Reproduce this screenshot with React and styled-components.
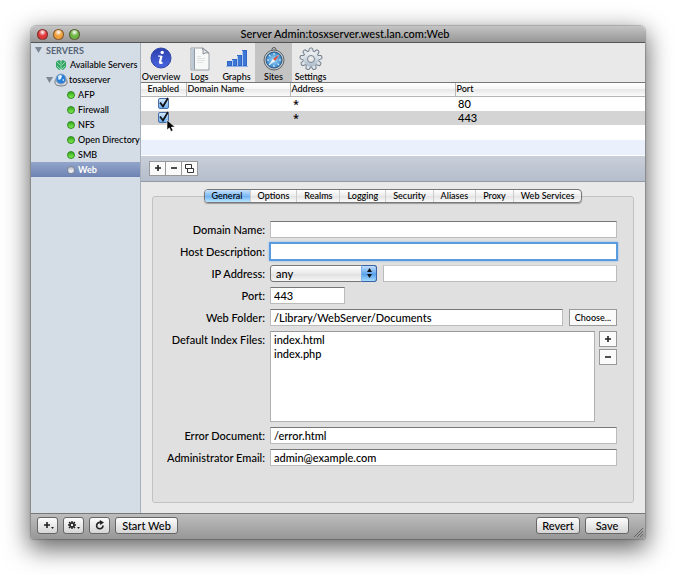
import React, { useState } from "react";
import styled, { createGlobalStyle } from "styled-components";

const SERVICES = ["AFP", "Firewall", "NFS", "Open Directory", "SMB", "Web"];
const TABS = [
  "General",
  "Options",
  "Realms",
  "Logging",
  "Security",
  "Aliases",
  "Proxy",
  "Web Services",
];

// Icons
const InfoIcon = () => (
  <svg width="22" height="22" viewBox="0 0 22 22">
    <defs>
      <linearGradient id="info" x1="0" y1="0" x2="0" y2="1">
        <stop offset="0" stopColor="#2c3fae" />
        <stop offset="1" stopColor="#4a66e0" />
      </linearGradient>
    </defs>
    <circle cx="11" cy="11" r="10" fill="url(#info)" stroke="#3346a8" />
    <circle cx="12.2" cy="5.400" r="1.700" fill="#fff" />
    <path
      d="M8.2 9.200h2.300M12.600 16h-1.200"
      stroke="#fff"
      strokeWidth="1.200"
    />
    <path
      d="M11.500 8.800l-1.600 6.400q0 1.200 2.400.3"
      fill="none"
      stroke="#fff"
      strokeWidth="2.200"
    />
  </svg>
);

const LogsIcon = () => (
  <svg width="20" height="24" viewBox="0 0 20 24">
    <path d="M1 1h12l6 5v17H1z" fill="#f7f8f8" stroke="#9aa1a6" />
    <path d="M1.500 1.500h3v21h-3z" fill="#bcc8d2" />
    <path d="M4.500 1.500v21" stroke="#8f9ba5" />
    <path d="M12 1q2 3 1 6 3-2 6-1z" fill="#e9ebec" stroke="#8b9399" />
    <path
      d="M7 9.500h4M7 11.500h8M7 13.500h8M7 15.500h6"
      stroke="#dfe1e3"
      strokeWidth="1"
    />
  </svg>
);

const GraphsIcon = () => (
  <svg width="22" height="22" viewBox="0 0 22 22">
    <g fill="#3d78d6" stroke="#2f66c4">
      <rect x="1.500" y="14.500" width="4" height="4" />
      <rect x="6.500" y="12.500" width="4" height="6" />
      <rect x="11.500" y="8.500" width="4" height="10" />
      <rect x="16.500" y="3.500" width="4" height="15" />
    </g>
    <path d="M0 19.500h22" stroke="#8fb2e8" />
    <path d="M6.500 13v6M11.500 9v10M16.500 4v15" stroke="#a9c6f0" />
  </svg>
);

const TICKS = [0, 45, 90, 135, 180, 225, 270, 315];

const SitesIcon = () => (
  <svg width="24" height="24" viewBox="0 0 24 24">
    <defs>
      <radialGradient id="dial">
        <stop offset="0" stopColor="#a9dcf8" />
        <stop offset="1" stopColor="#2f82cc" />
      </radialGradient>
    </defs>
    <circle cx="12" cy="2.500" r="2" fill="none" stroke="#555" />
    <circle cx="12" cy="13" r="10" fill="#c3c8cc" stroke="#5c6369" />
    <circle cx="12" cy="13" r="8" fill="url(#dial)" stroke="#3a5d80" />
    {TICKS.map((a) => (
      <path
        key={a}
        d="M12 6v2"
        stroke="#f2f9fd"
        transform={`rotate(${a} 12 13)`}
      />
    ))}
    <path d="M17.500 7.500l-4.500 6.500-2-2z" fill="#e24a35" />
    <path d="M6.500 18.500l4.500-6.500 2 2z" fill="#f5f9fc" />
  </svg>
);

const TEETH = [0, 40, 80, 120, 160, 200, 240, 280, 320];

const GearIcon = () => (
  <svg width="24" height="24" viewBox="0 0 24 24">
    <defs>
      <linearGradient id="gear" x1="0" y1="0" x2="0" y2="1">
        <stop offset="0" stopColor="#f2f4f6" />
        <stop offset="1" stopColor="#a9b9ca" />
      </linearGradient>
    </defs>
    <g fill="#dfe5eb" stroke="#75818e">
      <circle cx="12" cy="12" r="7.800" />
      {TEETH.map((a) => (
        <path
          key={a}
          d="M9.600 5l.8-3.600q1.600-1 3.200 0l.8 3.600"
          transform={`rotate(${a} 12 12)`}
        />
      ))}
    </g>
    <circle cx="12" cy="12" r="7.600" fill="url(#gear)" />
    <circle cx="12" cy="12" r="3.500" fill="#e9ebed" stroke="#75818e" />
  </svg>
);

const GlobeIcon = () => (
  <svg width="12" height="12" viewBox="0 0 12 12">
    <path d="M1 3l3-2 2 1 2-1 3 2v5l-3 3-2-1-2 1-3-3z" fill="#36a568" />
    <path
      d="M2 3l3 3M10 3L7 6M2 7l3 3M10 7l-3 3M6 2v9"
      stroke="#a5e6bb"
      strokeWidth=".8"
    />
  </svg>
);

const ServerIcon = () => (
  <svg width="14" height="14" viewBox="0 0 14 14">
    <path d="M1 8q-1 5 6 5t6-5l-1-2H2z" fill="#d6d9dd" stroke="#767d86" />
    <circle cx="7" cy="6" r="5" fill="#2b7fd8" stroke="#8fa3b8" />
    <path d="M4 3q3-2 4 0L7 6 4.500 7zM8 7l2-1v2z" fill="#dff1fb" />
  </svg>
);

const Disclosure = () => (
  <svg width="7" height="6" viewBox="0 0 7 6">
    <path d="M0 0h7L3.500 6z" fill="#7c8894" />
  </svg>
);

const DuplicateIcon = () => (
  <svg width="9" height="9" viewBox="0 0 9 9">
    <path d="M.5.500h6v4h-6zM2.500 4.500h6v4h-6z" fill="#fff" stroke="#333" />
  </svg>
);

const PlusIcon = ({ menu }) => (
  <svg width={menu ? 12 : 10} height="10" viewBox={menu ? "0 0 12 10" : "0 0 10 10"}>
    <path d="M5 2v6M2 5h6" stroke="#222" strokeWidth="1.600" />
    {menu && <path d="M9 7h3l-1.500 2z" fill="#222" />}
  </svg>
);

const MinusIcon = () => (
  <svg width="10" height="10" viewBox="0 0 10 10">
    <path d="M2 5h6" stroke="#222" strokeWidth="1.600" />
  </svg>
);

const ActionIcon = () => (
  <svg width="13" height="10" viewBox="0 0 13 10">
    <path
      d="M5 1v8M1 5h8M2 2l6 6M8 2L2 8"
      stroke="#222"
      strokeWidth="1.400"
    />
    <circle cx="5" cy="5" r="2" fill="#eee" stroke="#222" strokeWidth="1.500" />
    <path d="M10 7h3l-1.500 2z" fill="#222" />
  </svg>
);

const RefreshIcon = () => (
  <svg width="10" height="10" viewBox="0 0 10 10">
    <path
      d="M8 5.500A3.200 3.200 0 1 1 5.500 2.500"
      fill="none"
      stroke="#222"
      strokeWidth="1.600"
    />
    <path d="M4.800 0L9 2.500 5.200 5z" fill="#222" />
  </svg>
);

const Pointer = () => (
  <CursorSvg width="10" height="14" viewBox="0 0 10 14">
    <path
      d="M1 1v10l2.400-2.200L5 12.500l2-.9-1.600-3.500H9z"
      fill="#000"
      stroke="#fff"
      strokeWidth=".6"
    />
  </CursorSvg>
);

const Check = ({ label, pointer }) => (
  <CheckWrap>
    <CheckBox type="checkbox" defaultChecked aria-label={label} />
    <CheckMark width="11" height="12" viewBox="0 0 11 12">
      <path d="M2 5.500l3 4L10 1" fill="none" stroke="#111" strokeWidth="1.800" />
    </CheckMark>
    {pointer && <Pointer />}
  </CheckWrap>
);

const App = () => {
  const [tab, setTab] = useState("General");
  const [service, setService] = useState("Web");

  return (
    <Desktop>
      <GlobalStyle />
      <Window>
        <TitleBar>
          <Lights>
            <Light $color="#e0383b" aria-label="Close" />
            <Light $color="#f0a03c" aria-label="Minimize" />
            <Light $color="#6fb545" aria-label="Zoom" />
          </Lights>
          <Title>Server Admin:tosxserver.west.lan.com:Web</Title>
        </TitleBar>

        <Body>
          <Sidebar>
            <SideHeading>
              <Disclosure />
              SERVERS
            </SideHeading>
            <SideItem $indent={24}>
              <GlobeIcon />
              Available Servers
            </SideItem>
            <SideItem $indent={15} $gap={1}>
              <Disclosure />
              <ServerIcon />
              tosxserver
            </SideItem>
            {SERVICES.map((name) => (
              <SideItem
                key={name}
                $indent={36}
                $active={service === name}
                onClick={() => setService(name)}
              >
                <Dot $off={name === "Web"} />
                {name}
              </SideItem>
            ))}
          </Sidebar>

          <Content>
            <Toolbar>
              <Tool>
                <InfoIcon />
                Overview
              </Tool>
              <Tool>
                <LogsIcon />
                Logs
              </Tool>
              <Tool>
                <GraphsIcon />
                Graphs
              </Tool>
              <Tool $active>
                <SitesIcon />
                Sites
              </Tool>
              <Tool>
                <GearIcon />
                Settings
              </Tool>
            </Toolbar>

            <SiteTable>
              <colgroup>
                <col style={{ width: 45 }} />
                <col style={{ width: 104 }} />
                <col style={{ width: 165 }} />
                <col />
              </colgroup>
              <thead>
                <tr>
                  <HeadCell $center>Enabled</HeadCell>
                  <HeadCell>Domain Name</HeadCell>
                  <HeadCell>Address</HeadCell>
                  <HeadCell>Port</HeadCell>
                </tr>
              </thead>
              <tbody>
                <Row>
                  <Cell $center>
                    <Check label="Enable port 80" />
                  </Cell>
                  <Cell />
                  <AnyCell>*</AnyCell>
                  <Cell>80</Cell>
                </Row>
                <Row $color="#d4d4d4">
                  <Cell $center>
                    <Check label="Enable port 443" pointer />
                  </Cell>
                  <Cell />
                  <AnyCell>*</AnyCell>
                  <Cell>443</Cell>
                </Row>
                <Row $empty>
                  <Cell colSpan="4" />
                </Row>
                <Row $empty $color="#eaf1fd">
                  <Cell colSpan="4" />
                </Row>
              </tbody>
            </SiteTable>

            <TableBar>
              <Square aria-label="Add site">
                <PlusIcon />
              </Square>
              <Square aria-label="Remove site">
                <MinusIcon />
              </Square>
              <Square aria-label="Duplicate site">
                <DuplicateIcon />
              </Square>
            </TableBar>

            <Pane>
              <Tabs role="tablist">
                {TABS.map((name) => (
                  <Tab
                    key={name}
                    role="tab"
                    aria-selected={tab === name}
                    $active={tab === name}
                    onClick={() => setTab(name)}
                  >
                    {name}
                  </Tab>
                ))}
              </Tabs>
              <Group>
                <Label htmlFor="domain">Domain Name:</Label>
                <Input id="domain" />

                <Label htmlFor="host">Host Description:</Label>
                <Input id="host" $focused />

                <Label htmlFor="ip">IP Address:</Label>
                <Line>
                  <SelectWrap>
                    <Select id="ip">
                      <option>any</option>
                    </Select>
                    <Stepper>
                      <svg width="7" height="10" viewBox="0 0 7 10">
                        <path d="M1 4h5L3.500 0zM1 6h5l-2.500 4z" fill="#111" />
                      </svg>
                    </Stepper>
                  </SelectWrap>
                  <Input aria-label="Other IP address" $light />
                </Line>

                <Label htmlFor="port">Port:</Label>
                <PortInput id="port" defaultValue="443" />

                <Label htmlFor="folder">Web Folder:</Label>
                <Line>
                  <Input id="folder" defaultValue="/Library/WebServer/Documents" />
                  <Choose>Choose...</Choose>
                </Line>

                <Label htmlFor="index">Default Index Files:</Label>
                <ListLine>
                  <IndexFiles id="index" defaultValue={"index.html\nindex.php"} />
                  <Stack>
                    <SmallSquare aria-label="Add index file">
                      <PlusIcon />
                    </SmallSquare>
                    <SmallSquare aria-label="Remove index file">
                      <MinusIcon />
                    </SmallSquare>
                  </Stack>
                </ListLine>

                <Label htmlFor="error">Error Document:</Label>
                <Input id="error" defaultValue="/error.html" />

                <Label htmlFor="email">Administrator Email:</Label>
                <Input id="email" defaultValue="admin@example.com" />
              </Group>
            </Pane>
          </Content>
        </Body>

        <Footer>
          <FootButton aria-label="Add">
            <PlusIcon menu />
          </FootButton>
          <FootButton aria-label="Actions">
            <ActionIcon />
          </FootButton>
          <FootButton aria-label="Refresh">
            <RefreshIcon />
          </FootButton>
          <FootButton $width={63}>Start Web</FootButton>
          <Spacer />
          <FootButton $width={44}>Revert</FootButton>
          <FootButton $width={44}>Save</FootButton>
          <Grip width="9" height="9" viewBox="0 0 9 9">
            <path d="M0 9l9-9M3 9l6-6M6 9l3-3" stroke="#666" />
          </Grip>
        </Footer>
      </Window>
    </Desktop>
  );
};

const GlobalStyle = createGlobalStyle`
  * {
    box-sizing: border-box;
  }
  body {
    margin: 0;
    background: #fff;
  }
  body, button, input, select, textarea {
    font-family: Lato, "Open Sans", sans-serif;
    font-size: 11px;
    font-weight: 500;
    color: #000;
  }
  button {
    padding: 0;
    border: 0;
    background: none;
    white-space: nowrap;
  }
  svg {
    flex: none;
  }
`;

const Desktop = styled.main`
  padding: 26px 35px 36px 31px;
`;

const Window = styled.div`
  display: flex;
  flex-direction: column;
  border-radius: 5px 5px 2px 2px;
  box-shadow: 0 0 1px 1px rgba(0, 0, 0, 0.2), 0 8px 24px 2px rgba(0, 0, 0, 0.6);
`;

const TitleBar = styled.header`
  display: flex;
  align-items: center;
  height: 17px;
  padding: 0 6px;
  border-bottom: 1px solid #555;
  border-radius: 5px 5px 0 0;
  background: linear-gradient(#c4c4c4, #979797);
`;

const Lights = styled.div`
  display: flex;
  gap: 5px;
  width: 54px;
`;

const Light = styled.button`
  width: 11px;
  height: 11px;
  border: 1px solid rgba(60, 30, 20, 0.6);
  border-radius: 50%;
  background: radial-gradient(
    circle at 50% 25%,
    #fff 0,
    ${(props) => props.$color} 45%
  );
`;

const Title = styled.h1`
  flex: 1;
  margin: 0 40px 0 0;
  font-size: 11px;
  line-height: 16px;
  font-weight: 500;
  text-align: center;
`;

const Body = styled.div`
  display: flex;
`;

const Sidebar = styled.nav`
  width: 110px;
  flex: none;
  border-right: 1px solid #a9afb6;
  background: #d4dce6;
`;

const SideHeading = styled.h2`
  display: flex;
  align-items: center;
  gap: 4px;
  height: 14px;
  margin: 0;
  padding-left: 4px;
  font-size: 9px;
  font-weight: 700;
  color: #566573;
`;

const SideItem = styled.button`
  display: flex;
  align-items: center;
  gap: ${(props) => props.$gap || 3}px;
  width: 100%;
  height: 15px;
  padding-left: ${(props) => props.$indent}px;
  font-size: 9px;
  font-weight: ${(props) => (props.$active ? 700 : 500)};
  color: ${(props) => (props.$active ? "#fff" : "#000")};
  background: ${(props) =>
    props.$active ? "linear-gradient(#93a5cb, #6d83b2)" : "none"};
`;

const Dot = styled.span`
  flex: none;
  width: 8px;
  height: 8px;
  border: 1px solid ${(props) => (props.$off ? "#7e8798" : "#2e8a1d")};
  border-radius: 50%;
  background: ${(props) =>
    props.$off
      ? "linear-gradient(#b9bfc9, #fff)"
      : "linear-gradient(#36a51f, #7df04f)"};
`;

const Content = styled.section`
  flex: 1;
  min-width: 0;
  background: #e9e9e9;
`;

const Toolbar = styled.div`
  display: flex;
  height: 40px;
  border-bottom: 1px solid #777;
`;

const Tool = styled.button`
  display: flex;
  flex-direction: column;
  align-items: center;
  justify-content: space-between;
  width: 37px;
  height: 39px;
  padding-top: 4px;
  font-size: 9px;
  line-height: 11px;
  background: ${(props) => (props.$active ? "#c3c3c3" : "none")};

  &:first-child {
    width: 40px;
  }
`;

const SiteTable = styled.table`
  width: 100%;
  table-layout: fixed;
  border-collapse: collapse;
  background: #fff;
`;

const HeadCell = styled.th`
  height: 13px;
  padding: 0 1px;
  border-bottom: 1px solid #b5b5b5;
  border-left: ${(props) => (props.$center ? "0" : "1px solid #b9b9b9")};
  background: linear-gradient(#fff 0, #f6f6f6 45%, #e8e8e8 50%, #fbfbfb);
  font-size: 9px;
  line-height: 12px;
  font-weight: 500;
  text-align: ${(props) => (props.$center ? "center" : "left")};
`;

const Row = styled.tr`
  height: ${(props) => (props.$empty ? 15 : 14)}px;
  background: ${(props) => props.$color || "#fff"};
`;

const Cell = styled.td`
  padding: 0 3px;
  line-height: 14px;
  text-align: ${(props) => (props.$center ? "center" : "left")};
`;

const AnyCell = styled(Cell)`
  font-family: "Open Sans", sans-serif;
  font-weight: 600;
`;

const CheckWrap = styled.span`
  display: block;
  position: relative;
  width: 11px;
  height: 11px;
  margin: 0 auto;
`;

const CheckBox = styled.input`
  appearance: none;
  display: block;
  width: 11px;
  height: 11px;
  margin: 0;
  border: 1px solid #4a6da8;
  border-radius: 2px;
  background: linear-gradient(#d3e8fc, #6caef0);
`;

const CheckMark = styled.svg`
  position: absolute;
  left: 0;
  top: -1px;
  pointer-events: none;

  ${CheckBox}:not(:checked) + & {
    display: none;
  }
`;

const CursorSvg = styled.svg`
  position: absolute;
  left: 8px;
  top: 7px;
  pointer-events: none;
`;

const TableBar = styled.div`
  display: flex;
  align-items: center;
  height: 27px;
  padding-left: 8px;
  border-top: 1px solid #fff;
  border-bottom: 1px solid #929aa6;
  background: linear-gradient(#c9cfda, #b5bdcb);
`;

const Square = styled.button`
  display: flex;
  align-items: center;
  justify-content: center;
  width: 17px;
  height: 15px;
  margin-right: -1px;
  border: 1px solid #999;
  background: #fafafa;
`;

const SmallSquare = styled(Square)`
  width: 18px;
  height: 16px;
  margin: 0;
`;

const Pane = styled.div`
  display: flex;
  flex-direction: column;
  padding: 7px 11px 10px;
`;

const Tabs = styled.div`
  display: flex;
  align-self: center;
  position: relative;
  height: 14px;
  border: 1px solid #777;
  border-radius: 4px;
  background: linear-gradient(#fff, #ececec 50%, #e2e2e2 51%, #fafafa);
  box-shadow: 0 1px 1px rgba(0, 0, 0, 0.3);
`;

const Tab = styled.button`
  padding: 0 7px;
  border-right: 1px solid #ccc;
  font-size: 9px;
  line-height: 11px;
  background: ${(props) =>
    props.$active
      ? "linear-gradient(#c5e0fb, #7dbaf5 50%, #6fb0f2 51%, #b9e6ff)"
      : "none"};

  &:first-child {
    border-radius: 3px 0 0 3px;
  }
  &:last-child {
    border-right: 0;
  }
`;

const Group = styled.div`
  display: grid;
  grid-template-columns: 112px 1fr;
  column-gap: 5px;
  row-gap: 5px;
  margin-top: -7px;
  padding: 24px 16px 36px 0;
  border: 1px solid #c2c2c2;
  border-radius: 3px;
  background: #e0e0e0;
`;

const Label = styled.label`
  line-height: 17px;
  text-align: right;
  white-space: nowrap;
`;

const Input = styled.input`
  flex: 1;
  width: 100%;
  min-width: 0;
  height: 17px;
  padding: 0 3px;
  border: 1px solid #bbb;
  border-top-color: ${(props) => (props.$light ? "#ccc" : "#777")};
  background: #fff;
  outline: none;
  ${(props) =>
    props.$focused &&
    "border-color: #5a9ade; box-shadow: 0 0 0 1px #5a9ade, 0 0 2px 1px #8ab8e8;"}
`;

const PortInput = styled(Input)`
  width: 75px;
`;

const Line = styled.div`
  display: flex;
  gap: 6px;
`;

const ListLine = styled(Line)`
  gap: 4px;
`;

const SelectWrap = styled.div`
  position: relative;
  display: flex;
  width: 107px;
`;

const Select = styled.select`
  appearance: none;
  width: 100%;
  height: 17px;
  padding: 0 5px;
  border: 1px solid #777;
  border-radius: 3px;
  background: linear-gradient(#fff, #eaeaea 50%, #dedede 51%, #f6f6f6);
`;

const Stepper = styled.span`
  position: absolute;
  top: 0;
  right: 0;
  display: flex;
  align-items: center;
  justify-content: center;
  width: 16px;
  height: 17px;
  border: 1px solid #3a62a5;
  border-left-color: #7fb0ea;
  border-radius: 0 3px 3px 0;
  background: linear-gradient(#c2defa, #65a7ef 50%, #4f98ea 51%, #a5dcff);
  pointer-events: none;
`;

const Choose = styled.button`
  width: 48px;
  height: 17px;
  border: 1px solid #999;
  background: #fafafa;
  font-size: 9px;
`;

const IndexFiles = styled.textarea`
  flex: 1;
  min-width: 0;
  height: 91px;
  padding: 1px 3px;
  border: 1px solid #b0b0b0;
  border-top-color: #999;
  background: #fff;
  line-height: 14px;
  resize: none;
  outline: none;
`;

const Stack = styled.div`
  display: flex;
  flex-direction: column;
  gap: 2px;
`;

const Footer = styled.footer`
  display: flex;
  align-items: center;
  gap: 5px;
  height: 26px;
  padding: 0 2px 2px 6px;
  border-top: 1px solid #777;
  border-radius: 0 0 2px 2px;
  background: linear-gradient(#bdbdbd, #979797);
`;

const FootButton = styled.button`
  display: flex;
  align-items: center;
  justify-content: center;
  width: ${(props) => props.$width || 21}px;
  height: 17px;
  border: 1px solid #666;
  border-radius: 3px;
  background: linear-gradient(#fdfdfd, #d5d5d5);
`;

const Spacer = styled.div`
  flex: 1;
`;

const Grip = styled.svg`
  align-self: flex-end;
`;

export default App;
